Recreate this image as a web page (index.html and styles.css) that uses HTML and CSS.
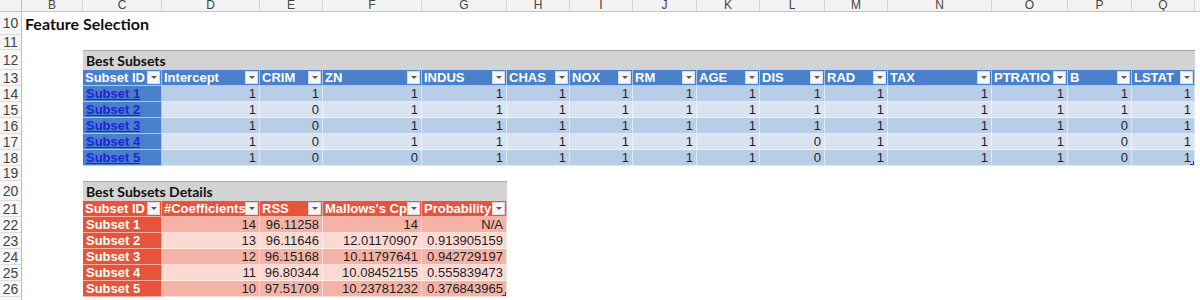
FILE: index.html
```html
<!DOCTYPE html>
<html lang="en">
<head>
    <meta charset="UTF-8">
    <title>Feature Selection</title>
    <link rel="stylesheet" href="styles.css">
</head>
<body>
    <div class="colbar">
        <div class="corner"></div>
        <div class="c-b">B</div><div class="c-c">C</div><div class="c-d">D</div><div class="c-e">E</div>
        <div class="c-f">F</div><div class="c-g">G</div><div class="c-h">H</div><div class="c-i">I</div>
        <div class="c-j">J</div><div class="c-k">K</div><div class="c-l">L</div><div class="c-m">M</div>
        <div class="c-n">N</div><div class="c-o">O</div><div class="c-p">P</div><div class="c-q">Q</div>
        <div class="c-r"></div>
    </div>

    <div class="sheet">
        <div class="gutter">
            <div class="rn h-title">10</div>
            <div class="rn h-gap">11</div>
            <div class="rn h-cap">12</div>
            <div class="rn">13</div>
            <div class="rn">14</div>
            <div class="rn">15</div>
            <div class="rn">16</div>
            <div class="rn">17</div>
            <div class="rn">18</div>
            <div class="rn h-gap">19</div>
            <div class="rn h-cap">20</div>
            <div class="rn">21</div>
            <div class="rn">22</div>
            <div class="rn">23</div>
            <div class="rn">24</div>
            <div class="rn">25</div>
            <div class="rn">26</div>
            <div class="rn">27</div>
        </div>

        <div class="area">
            <h1 class="sheet-title">Feature Selection</h1>
            <div class="gap-row"></div>

            <!-- Best Subsets: 1 = variable kept in the subset -->
            <div class="tbl blue subsets">
                <div class="caption">Best Subsets</div>

                <div class="th"><span>Subset ID</span><i class="filter"></i></div>
                <div class="th"><span>Intercept</span><i class="filter"></i></div>
                <div class="th"><span>CRIM</span><i class="filter"></i></div>
                <div class="th"><span>ZN</span><i class="filter"></i></div>
                <div class="th"><span>INDUS</span><i class="filter"></i></div>
                <div class="th"><span>CHAS</span><i class="filter"></i></div>
                <div class="th"><span>NOX</span><i class="filter"></i></div>
                <div class="th"><span>RM</span><i class="filter"></i></div>
                <div class="th"><span>AGE</span><i class="filter"></i></div>
                <div class="th"><span>DIS</span><i class="filter"></i></div>
                <div class="th"><span>RAD</span><i class="filter"></i></div>
                <div class="th"><span>TAX</span><i class="filter"></i></div>
                <div class="th"><span>PTRATIO</span><i class="filter"></i></div>
                <div class="th"><span>B</span><i class="filter"></i></div>
                <div class="th"><span>LSTAT</span><i class="filter"></i></div>

                <div class="id odd"><a href="#">Subset 1</a></div>
                <div class="td odd">1</div><div class="td odd">1</div><div class="td odd">1</div><div class="td odd">1</div>
                <div class="td odd">1</div><div class="td odd">1</div><div class="td odd">1</div><div class="td odd">1</div>
                <div class="td odd">1</div><div class="td odd">1</div><div class="td odd">1</div><div class="td odd">1</div>
                <div class="td odd">1</div><div class="td odd">1</div>

                <div class="id"><a href="#">Subset 2</a></div>
                <div class="td">1</div><div class="td">0</div><div class="td">1</div><div class="td">1</div>
                <div class="td">1</div><div class="td">1</div><div class="td">1</div><div class="td">1</div>
                <div class="td">1</div><div class="td">1</div><div class="td">1</div><div class="td">1</div>
                <div class="td">1</div><div class="td">1</div>

                <div class="id odd"><a href="#">Subset 3</a></div>
                <div class="td odd">1</div><div class="td odd">0</div><div class="td odd">1</div><div class="td odd">1</div>
                <div class="td odd">1</div><div class="td odd">1</div><div class="td odd">1</div><div class="td odd">1</div>
                <div class="td odd">1</div><div class="td odd">1</div><div class="td odd">1</div><div class="td odd">1</div>
                <div class="td odd">0</div><div class="td odd">1</div>

                <div class="id"><a href="#">Subset 4</a></div>
                <div class="td">1</div><div class="td">0</div><div class="td">1</div><div class="td">1</div>
                <div class="td">1</div><div class="td">1</div><div class="td">1</div><div class="td">1</div>
                <div class="td">0</div><div class="td">1</div><div class="td">1</div><div class="td">1</div>
                <div class="td">0</div><div class="td">1</div>

                <div class="id odd"><a href="#">Subset 5</a></div>
                <div class="td odd">1</div><div class="td odd">0</div><div class="td odd">0</div><div class="td odd">1</div>
                <div class="td odd">1</div><div class="td odd">1</div><div class="td odd">1</div><div class="td odd">1</div>
                <div class="td odd">0</div><div class="td odd">1</div><div class="td odd">1</div><div class="td odd">1</div>
                <div class="td odd">0</div><div class="td odd last">1</div>
            </div>

            <div class="gap-row"></div>

            <div class="tbl red details">
                <div class="caption">Best Subsets Details</div>

                <div class="th"><span>Subset ID</span><i class="filter"></i></div>
                <div class="th"><span>#Coefficients</span><i class="filter"></i></div>
                <div class="th"><span>RSS</span><i class="filter"></i></div>
                <div class="th"><span>Mallows's Cp</span><i class="filter"></i></div>
                <div class="th"><span>Probability</span><i class="filter"></i></div>

                <div class="id odd">Subset 1</div>
                <div class="td odd">14</div><div class="td odd">96.11258</div><div class="td odd">14</div><div class="td odd">N/A</div>

                <div class="id">Subset 2</div>
                <div class="td">13</div><div class="td">96.11646</div><div class="td">12.01170907</div><div class="td">0.913905159</div>

                <div class="id odd">Subset 3</div>
                <div class="td odd">12</div><div class="td odd">96.15168</div><div class="td odd">10.11797641</div><div class="td odd">0.942729197</div>

                <div class="id">Subset 4</div>
                <div class="td">11</div><div class="td">96.80344</div><div class="td">10.08452155</div><div class="td">0.555839473</div>

                <div class="id odd">Subset 5</div>
                <div class="td odd">10</div><div class="td odd">97.51709</div><div class="td odd">10.23781232</div><div class="td odd last">0.376843965</div>
            </div>
        </div>
    </div>
</body>
</html>
```

FILE: styles.css
```css
body {
    margin: 0;
    background: #fff;
    color: #1e1e1e;
    font-family: "Liberation Sans", Arial, sans-serif;
    font-size: 13px;
    overflow: hidden;
}

/* column letters */
.colbar {
    display: flex;
    height: 11px;
    background: #f3f3f3;
    border-bottom: 1px solid #c4c4c4;
    overflow: hidden;
}
.colbar div {
    flex: none;
    box-sizing: border-box;
    border-right: 1px solid #d6d6d6;
    text-align: center;
    color: #444;
    font-size: 12px;
    line-height: 11px;
}
.colbar .corner { width: 22px; border-right-color: #bdbdbd; }
.c-b { width: 61px; }
.c-c { width: 79px; }
.c-d { width: 98px; }
.c-e { width: 63px; }
.c-f { width: 99px; }
.c-g { width: 85px; }
.c-h { width: 63px; }
.c-i { width: 63px; }
.c-j { width: 64px; }
.c-k { width: 63px; }
.c-l { width: 65px; }
.c-m { width: 63px; }
.c-n { width: 104px; }
.c-o { width: 76px; }
.c-p { width: 64px; }
.c-q { width: 63px; }
.c-r { width: 40px; }

.sheet {
    display: flex;
}

/* row numbers */
.gutter {
    flex: none;
    width: 22px;
    background: #f7f7f7;
    border-right: 1px solid #bdbdbd;
    box-sizing: border-box;
}
.rn {
    height: 16px;
    line-height: 16px;
    box-sizing: border-box;
    border-bottom: 1px solid #dcdcdc;
    text-align: center;
    color: #444;
    font-size: 14px;
}
.rn.h-title { height: 23px; line-height: 23px; }
.rn.h-gap { height: 15px; line-height: 15px; }
.rn.h-cap { height: 20px; line-height: 20px; }

.area {
    flex: 1;
    display: flex;
    flex-direction: column;
    align-items: flex-start;
}

.sheet-title {
    margin: 0;
    height: 23px;
    padding-left: 3px;
    font-family: Lato, "Liberation Sans", sans-serif;
    font-size: 16px;
    font-weight: bold;
    line-height: 24px;
    color: #111;
}

.gap-row {
    height: 15px;
}

/* excel-style tables */
.tbl {
    display: grid;
    grid-template-rows: 20px;
    grid-auto-rows: 16px;
    margin-left: 61px;
}
.subsets {
    grid-template-columns: 79px 98px 63px 99px 85px 63px 63px 64px 63px 65px 63px 104px 76px 64px 63px;
}
.details {
    grid-template-columns: 79px 98px 63px 99px 85px;
}

.caption {
    grid-column: 1 / -1;
    box-sizing: border-box;
    background: #d3d3d3;
    border-top: 1px solid #a8a8a8;
    padding-left: 3px;
    font-family: Lato, "Liberation Sans", sans-serif;
    font-size: 14px;
    font-weight: bold;
    line-height: 20px;
    color: #111;
}

.th, .td, .id {
    box-sizing: border-box;
    border-right: 1px solid rgba(255, 255, 255, 0.55);
    border-bottom: 1px solid rgba(255, 255, 255, 0.55);
    line-height: 15px;
    white-space: nowrap;
    overflow: hidden;
}

.th {
    display: flex;
    align-items: center;
    padding-left: 2px;
    color: #fff;
    font-weight: bold;
}
.th span {
    flex: 1;
    overflow: hidden;
}
.filter {
    flex: none;
    position: relative;
    width: 13px;
    height: 13px;
    margin-right: 1px;
    box-sizing: border-box;
    background: #f6f6f6;
    border: 1px solid #dadada;
}
.filter::before {
    content: "";
    position: absolute;
    left: 3px;
    top: 4px;
    border-left: 3px solid transparent;
    border-right: 3px solid transparent;
    border-top: 3px solid #5a5a5a;
}

.td {
    text-align: right;
    padding-right: 3px;
}

.id {
    padding-left: 3px;
    font-weight: bold;
    color: #fff;
}
.id a {
    color: #2222dd;
}

.last {
    position: relative;
}
.last::after {
    content: "";
    position: absolute;
    right: 0;
    bottom: 0;
    width: 3px;
    height: 3px;
    border-right: 1px solid #26418a;
    border-bottom: 1px solid #26418a;
}

/* blue theme */
.blue .th, .blue .id { background: #4a7fc9; }
.blue .td { background: #dae4f1; }
.blue .td.odd { background: #b8cde8; }

/* red theme */
.red .th, .red .id { background: #e8533c; }
.red .td { background: #fcdad3; }
.red .td.odd { background: #f5b3a7; }
```
